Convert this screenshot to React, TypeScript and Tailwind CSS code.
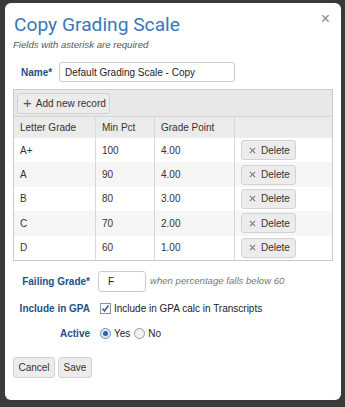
import React from "react";

const rows = [
  ["A+", "100", "4.00"],
  ["A", "90", "4.00"],
  ["B", "80", "3.00"],
  ["C", "70", "2.00"],
  ["D", "60", "1.00"],
];

function XIcon() {
  return (
    <svg width="7" height="7" viewBox="0 0 8 8" className="mr-[5px]">
      <path d="M1 1 L7 7 M7 1 L1 7" stroke="#777" strokeWidth="1.2" />
    </svg>
  );
}

export default function App() {
  return (
    <div
      className="w-[345px] h-[407px] bg-[#3a3a3a] pt-[3px] pl-[5px] overflow-hidden"
      style={{ fontFamily: '"Liberation Sans", Arial, sans-serif' }}
    >
      <div className="relative w-[336px] h-[397px] bg-white rounded-[6px] pl-[8px] pr-[8px] text-[10px] text-[#333]">
        <div className="absolute right-[11px] top-[8px] text-[16px] text-[#888] leading-none">×</div>
        <div
          className="pt-[10px] text-[19.2px] leading-[24px] text-[#3a77b6] pl-[1px]"
          style={{ fontFamily: 'Roboto, sans-serif' }}
        >
          Copy Grading Scale
        </div>
        <div className="text-[9.6px] italic text-[#555] leading-[12px] mt-[2px]">
          Fields with asterisk are required
        </div>
        <div className="flex items-center mt-[11px] h-[20px]">
          <div className="w-[46px] pl-[8px] font-bold text-[#21508c] text-[10px]">Name*</div>
          <div className="w-[176px] h-[20px] border border-[#ccc] rounded-[3px] flex items-center pl-[5px] text-[10px] text-[#222]">
            Default Grading Scale - Copy
          </div>
        </div>
        <div className="mt-[7px] w-[320px] border border-[#ccc]">
          <div className="h-[27px] bg-[#e8e8e8] flex items-center pl-[3px] border-b border-[#d4d4d4]">
            <div className="h-[21px] w-[93px] bg-[#ececec] border border-[#d2d2d2] rounded-[3px] flex items-center pl-[5px] text-[10px] text-[#333]">
              <span className="text-[15px] leading-none mr-[4px] text-[#555] mt-[-2px]">+</span>
              Add new record
            </div>
          </div>
          <div className="grid grid-cols-[82px_59px_80px_1fr] h-[21px] bg-[#ebebeb]">
            <div className="flex items-center pl-[6px] border-r border-[#d8d8d8]">Letter Grade</div>
            <div className="flex items-center pl-[6px] border-r border-[#d8d8d8]">Min Pct</div>
            <div className="flex items-center pl-[6px] border-r border-[#d8d8d8]">Grade Point</div>
            <div />
          </div>
          {rows.map((r, i) => (
            <div
              key={i}
              className={
                "grid grid-cols-[82px_59px_80px_1fr] h-[24.4px] " +
                (i % 2 === 1 ? "bg-[#f6f6f6]" : "bg-white")
              }
            >
              <div className="flex items-center pl-[6px] border-r border-[#d8d8d8]">{r[0]}</div>
              <div className="flex items-center pl-[6px] border-r border-[#d8d8d8]">{r[1]}</div>
              <div className="flex items-center pl-[6px] border-r border-[#d8d8d8]">{r[2]}</div>
              <div className="flex items-center pl-[6px]">
                <div className="h-[20px] w-[55px] bg-[#ececec] border border-[#d2d2d2] rounded-[3px] flex items-center pl-[7px] text-[10px] text-[#333]">
                  <XIcon />
                  Delete
                </div>
              </div>
            </div>
          ))}
        </div>
        <div className="flex items-center mt-[10px] h-[21px]">
          <div className="w-[77px] text-right font-bold text-[#21508c] text-[10px] whitespace-nowrap">Failing Grade*</div>
          <div className="ml-[8px] w-[48px] h-[21px] border border-[#ccc] rounded-[3px] flex items-center pl-[9px] text-[10px] text-[#222]">
            F
          </div>
          <div className="ml-[4px] italic text-[9.6px] text-[#777]">when percentage falls below 60</div>
        </div>
        <div className="flex items-center mt-[7px] h-[20px]">
          <div className="w-[77px] text-right font-bold text-[#21508c] text-[10px] whitespace-nowrap">Include in GPA</div>
          <div className="ml-[10px] flex items-center">
            <div className="w-[11px] h-[11px] border border-[#8f8f9d] bg-white flex items-center justify-center">
              <svg width="9" height="9" viewBox="0 0 9 9">
                <path d="M1.5 4.5 L3.5 7 L7.5 1.5" stroke="#3b5eaa" strokeWidth="1.5" fill="none" />
              </svg>
            </div>
            <span className="ml-[3px] text-[10px] text-[#222]">Include in GPA calc in Transcripts</span>
          </div>
        </div>
        <div className="flex items-center mt-[5px] h-[20px]">
          <div className="w-[77px] text-right font-bold text-[#21508c] text-[10px]">Active</div>
          <div className="ml-[10px] flex items-center text-[10px] text-[#222]">
            <div className="w-[11px] h-[11px] rounded-full border border-[#6a8fc8] bg-[#dbe8f8] flex items-center justify-center">
              <div className="w-[5px] h-[5px] rounded-full bg-[#2c63b5]" />
            </div>
            <span className="ml-[3px]">Yes</span>
            <div className="ml-[4px] w-[11px] h-[11px] rounded-full border border-[#9a9a9a] bg-[#f2f2f2]" />
            <span className="ml-[3px]">No</span>
          </div>
        </div>
        <div className="flex mt-[13px] gap-[3px]">
          <div className="h-[21px] w-[42px] bg-[#ececec] border border-[#d2d2d2] rounded-[3px] flex items-center justify-center text-[10px] text-[#333]">
            Cancel
          </div>
          <div className="h-[21px] w-[34px] bg-[#ececec] border border-[#d2d2d2] rounded-[3px] flex items-center justify-center text-[10px] text-[#333]">
            Save
          </div>
        </div>
      </div>
    </div>
  );
}
